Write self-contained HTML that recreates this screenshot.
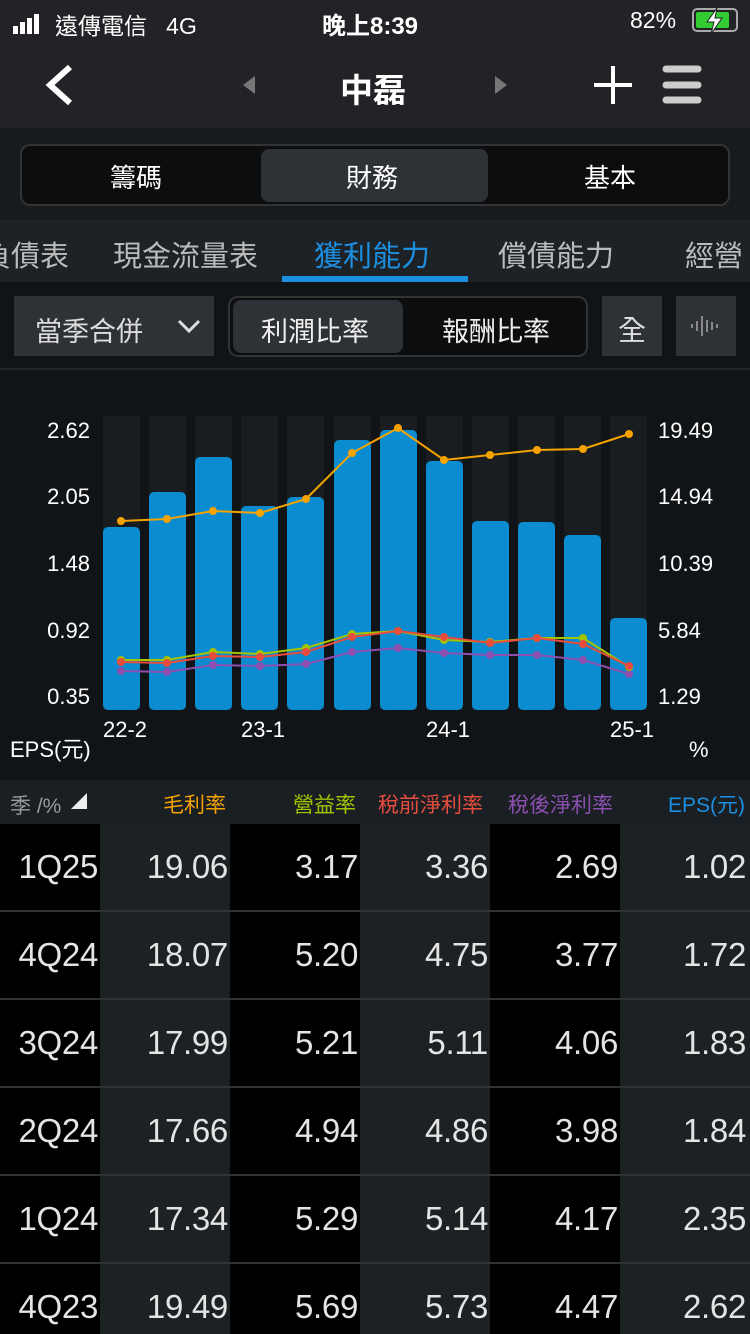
<!DOCTYPE html><html style="width:750px;height:1334px;overflow:hidden"><head><meta charset="utf-8"><style>
*{margin:0;padding:0;box-sizing:border-box}
body{width:750px;height:1334px;background:#111417;font-family:"Liberation Sans","Noto Sans CJK TC",sans-serif;color:#fff;position:relative;overflow:hidden}
.a{position:absolute;white-space:nowrap}
.tb{position:absolute;top:824px;height:510px}
.row{position:absolute;left:0;width:750px;height:88px}
.row .c{position:absolute;top:0;height:86px;line-height:86px;font-size:33px;color:#e4e4e4;text-align:right;letter-spacing:-0.3px}
.sep{position:absolute;left:0;width:750px;height:2px;background:#333}
</style></head><body>
<div class="a" style="left:0;top:0;width:750px;height:128px;background:#212326"></div>
<div class="a" style="left:13px;top:14px;height:20px;display:flex;align-items:flex-end;gap:2px">
<span style="display:inline-block;width:5px;height:8px;background:#fff"></span><span style="display:inline-block;width:5px;height:12px;background:#fff"></span><span style="display:inline-block;width:5px;height:16px;background:#fff"></span><span style="display:inline-block;width:5px;height:20px;background:#fff"></span></div>
<div class="a" style="left:55px;top:7px;font-size:23px">遠傳電信&nbsp;&nbsp;&nbsp;4G</div>
<div class="a" style="left:322px;top:6px;font-size:24px;font-weight:bold">晚上8:39</div>
<div class="a" style="left:630px;top:7px;font-size:23px">82%</div>
<div class="a" style="left:692px;top:8px;width:46px;height:24px;border:2px solid #aaa;border-radius:5px"><div style="position:absolute;left:2px;top:2px;width:33px;height:16px;background:#3c3;border-radius:2px"></div>
<svg style="position:absolute;left:10px;top:-3px" width="22" height="28"><polygon points="13,1 3,15 10,15 7,27 18,11 11,11" fill="#fff" stroke="#222" stroke-width="1"/></svg></div>
<svg class="a" style="left:0;top:50px" width="750" height="70"><polyline points="70,17 50,35 70,53" stroke="#fff" stroke-width="6" fill="none"/><polygon points="255,26 243,35 255,44" fill="#777"/><polygon points="495,26 507,35 495,44" fill="#777"/><path d="M594 35H632M613 16V54" stroke="#fff" stroke-width="4"/><g stroke="#ccc" stroke-width="7" stroke-linecap="round"><path d="M666 19H698M666 35H698M666 50H698"/></g></svg>
<div class="a" style="left:340px;top:64px;font-size:33px;font-weight:bold">中磊</div>
<div class="a" style="left:0;top:128px;width:750px;height:92px;background:#181b1e"></div>
<div class="a" style="left:20px;top:144px;width:710px;height:62px;border:2px solid #333;border-radius:10px;background:#0c0d0f"></div>
<div class="a" style="left:261px;top:149px;width:227px;height:53px;background:#2e3236;border-radius:8px"></div>
<div class="a" style="left:110px;top:158px;font-size:26px">籌碼</div>
<div class="a" style="left:346px;top:158px;font-size:26px">財務</div>
<div class="a" style="left:584px;top:158px;font-size:26px">基本</div>
<div class="a" style="left:0;top:220px;width:750px;height:62px;background:#1d2226"></div>
<div class="a" style="left:-18px;top:233px;font-size:29px;color:#bbb">負債表</div>
<div class="a" style="left:113px;top:233px;font-size:29px;color:#bbb">現金流量表</div>
<div class="a" style="left:314px;top:233px;font-size:29px;color:#1c8fe0">獲利能力</div>
<div class="a" style="left:282px;top:276px;width:186px;height:6px;background:#1c8fe0"></div>
<div class="a" style="left:498px;top:233px;font-size:29px;color:#bbb">償債能力</div>
<div class="a" style="left:685px;top:233px;font-size:29px;color:#bbb">經營</div>
<div class="a" style="left:14px;top:296px;width:200px;height:60px;background:#2e3236"></div>
<div class="a" style="left:35px;top:310px;font-size:27px;color:#ddd">當季合併</div>
<svg class="a" style="left:176px;top:318px" width="26" height="16"><polyline points="3,3 13,13 23,3" stroke="#ddd" stroke-width="3" fill="none"/></svg>
<div class="a" style="left:228px;top:296px;width:360px;height:61px;border:2px solid #333;border-radius:10px;background:#0c0d0f"></div>
<div class="a" style="left:233px;top:300px;width:170px;height:53px;background:#2e3236;border-radius:8px"></div>
<div class="a" style="left:261px;top:310px;font-size:27px;color:#eee">利潤比率</div>
<div class="a" style="left:442px;top:310px;font-size:27px;color:#eee">報酬比率</div>
<div class="a" style="left:602px;top:296px;width:60px;height:60px;background:#2e3236"></div>
<div class="a" style="left:618px;top:309px;font-size:28px;color:#ddd">全</div>
<div class="a" style="left:676px;top:296px;width:60px;height:60px;background:#2e3236"></div>
<svg class="a" style="left:686px;top:312px" width="40" height="28"><g stroke="#888" stroke-width="2"><path d="M6 12V16M11 9V19M16 4V24M21 8V20M26 10V18M31 12V16"/></g></svg>
<div class="a" style="left:0;top:368px;width:750px;height:2px;background:#22262a"></div>
<svg class="a" style="left:0;top:400px" width="750" height="380">
<g fill="#1a1d1f"><rect x="103" y="16" width="37" height="294"/><rect x="149" y="16" width="37" height="294"/><rect x="195" y="16" width="37" height="294"/><rect x="241" y="16" width="37" height="294"/><rect x="287" y="16" width="37" height="294"/><rect x="334" y="16" width="37" height="294"/><rect x="380" y="16" width="37" height="294"/><rect x="426" y="16" width="37" height="294"/><rect x="472" y="16" width="37" height="294"/><rect x="518" y="16" width="37" height="294"/><rect x="564" y="16" width="37" height="294"/><rect x="610" y="16" width="37" height="294"/></g>
<g fill="#0b8bd0"><rect x="103" y="127" width="37" height="183" rx="5"/><rect x="149" y="92" width="37" height="218" rx="5"/><rect x="195" y="57" width="37" height="253" rx="5"/><rect x="241" y="106" width="37" height="204" rx="5"/><rect x="287" y="97" width="37" height="213" rx="5"/><rect x="334" y="40" width="37" height="270" rx="5"/><rect x="380" y="30" width="37" height="280" rx="5"/><rect x="426" y="61" width="37" height="249" rx="5"/><rect x="472" y="121" width="37" height="189" rx="5"/><rect x="518" y="122" width="37" height="188" rx="5"/><rect x="564" y="135" width="37" height="175" rx="5"/><rect x="610" y="218" width="37" height="92" rx="5"/></g>
<g fill="none" stroke-width="2">
<polyline stroke="#f5a300" points="121,121 167,119 213,111 260,113 306,99 352,53 398,28 444,60 490,55 537,50 583,49 629,34"/>
<polyline stroke="#8c4fb0" points="121,271 167,272 213,265 260,266 306,264 352,252 398,248 444,253 490,255 537,255 583,260 629,274"/>
<polyline stroke="#a4c400" points="121,260 167,260 213,252 260,254 306,248 352,234 398,231 444,240 490,242 537,238 583,238 629,267"/>
<polyline stroke="#e84c3d" points="121,262 167,263 213,256 260,257 306,252 352,237 398,231 444,237 490,243 537,238 583,244 629,266"/>
</g>
<g fill="#f5a300"><circle cx="121" cy="121" r="4"/><circle cx="167" cy="119" r="4"/><circle cx="213" cy="111" r="4"/><circle cx="260" cy="113" r="4"/><circle cx="306" cy="99" r="4"/><circle cx="352" cy="53" r="4"/><circle cx="398" cy="28" r="4"/><circle cx="444" cy="60" r="4"/><circle cx="490" cy="55" r="4"/><circle cx="537" cy="50" r="4"/><circle cx="583" cy="49" r="4"/><circle cx="629" cy="34" r="4"/></g>
<g fill="#8c4fb0"><circle cx="121" cy="271" r="4"/><circle cx="167" cy="272" r="4"/><circle cx="213" cy="265" r="4"/><circle cx="260" cy="266" r="4"/><circle cx="306" cy="264" r="4"/><circle cx="352" cy="252" r="4"/><circle cx="398" cy="248" r="4"/><circle cx="444" cy="253" r="4"/><circle cx="490" cy="255" r="4"/><circle cx="537" cy="255" r="4"/><circle cx="583" cy="260" r="4"/><circle cx="629" cy="274" r="4"/></g>
<g fill="#a4c400"><circle cx="121" cy="260" r="4"/><circle cx="167" cy="260" r="4"/><circle cx="213" cy="252" r="4"/><circle cx="260" cy="254" r="4"/><circle cx="306" cy="248" r="4"/><circle cx="352" cy="234" r="4"/><circle cx="398" cy="231" r="4"/><circle cx="444" cy="240" r="4"/><circle cx="490" cy="242" r="4"/><circle cx="537" cy="238" r="4"/><circle cx="583" cy="238" r="4"/><circle cx="629" cy="267" r="4"/></g>
<g fill="#e84c3d"><circle cx="121" cy="262" r="4"/><circle cx="167" cy="263" r="4"/><circle cx="213" cy="256" r="4"/><circle cx="260" cy="257" r="4"/><circle cx="306" cy="252" r="4"/><circle cx="352" cy="237" r="4"/><circle cx="398" cy="231" r="4"/><circle cx="444" cy="237" r="4"/><circle cx="490" cy="243" r="4"/><circle cx="537" cy="238" r="4"/><circle cx="583" cy="244" r="4"/><circle cx="629" cy="266" r="4"/></g>
<g fill="#fff" font-family="Liberation Sans" font-size="22"><text x="90" y="38" text-anchor="end">2.62</text><text x="90" y="104" text-anchor="end">2.05</text><text x="90" y="171" text-anchor="end">1.48</text><text x="90" y="238" text-anchor="end">0.92</text><text x="90" y="304" text-anchor="end">0.35</text>
<text x="658" y="38">19.49</text><text x="658" y="104">14.94</text><text x="658" y="171">10.39</text><text x="658" y="238">5.84</text><text x="658" y="304">1.29</text>
<text x="103" y="337">22-2</text><text x="241" y="337">23-1</text><text x="426" y="337">24-1</text><text x="610" y="337">25-1</text>
<text x="10" y="357">EPS(元)</text><text x="689" y="357">%</text></g>
</svg>
<div class="a" style="left:0;top:780px;width:750px;height:44px;background:#1a1f23"></div>
<div class="a" style="left:10px;top:790px;font-size:21px;color:#999">季 /%</div>
<svg class="a" style="left:70px;top:792px" width="18" height="18"><polygon points="17,1 17,17 1,17" fill="#eee"/></svg>
<div class="a" style="left:163px;top:789px;font-size:21px;color:#f5a300">毛利率</div>
<div class="a" style="left:293px;top:789px;font-size:21px;color:#a4c400">營益率</div>
<div class="a" style="left:378px;top:789px;font-size:21px;color:#e84c3d">稅前淨利率</div>
<div class="a" style="left:508px;top:789px;font-size:21px;color:#8c4fb0">稅後淨利率</div>
<div class="a" style="left:668px;top:789px;font-size:21px;color:#1c8fe0">EPS(元)</div>
<div class="tb" style="left:0;width:100px;background:#000"></div>
<div class="tb" style="left:100px;width:130px;background:#1c2124"></div>
<div class="tb" style="left:230px;width:130px;background:#000"></div>
<div class="tb" style="left:360px;width:130px;background:#1c2124"></div>
<div class="tb" style="left:490px;width:130px;background:#000"></div>
<div class="tb" style="left:620px;width:130px;background:#1c2124"></div>
<div class="sep" style="top:910px"></div><div class="sep" style="top:998px"></div><div class="sep" style="top:1086px"></div><div class="sep" style="top:1174px"></div><div class="sep" style="top:1262px"></div>
<div class="row" style="top:824px"><div class="c" style="left:0;width:98px">1Q25</div><div class="c" style="left:100px;width:128px">19.06</div><div class="c" style="left:230px;width:128px">3.17</div><div class="c" style="left:360px;width:128px">3.36</div><div class="c" style="left:490px;width:128px">2.69</div><div class="c" style="left:620px;width:126px">1.02</div></div>
<div class="row" style="top:912px"><div class="c" style="left:0;width:98px">4Q24</div><div class="c" style="left:100px;width:128px">18.07</div><div class="c" style="left:230px;width:128px">5.20</div><div class="c" style="left:360px;width:128px">4.75</div><div class="c" style="left:490px;width:128px">3.77</div><div class="c" style="left:620px;width:126px">1.72</div></div>
<div class="row" style="top:1000px"><div class="c" style="left:0;width:98px">3Q24</div><div class="c" style="left:100px;width:128px">17.99</div><div class="c" style="left:230px;width:128px">5.21</div><div class="c" style="left:360px;width:128px">5.11</div><div class="c" style="left:490px;width:128px">4.06</div><div class="c" style="left:620px;width:126px">1.83</div></div>
<div class="row" style="top:1088px"><div class="c" style="left:0;width:98px">2Q24</div><div class="c" style="left:100px;width:128px">17.66</div><div class="c" style="left:230px;width:128px">4.94</div><div class="c" style="left:360px;width:128px">4.86</div><div class="c" style="left:490px;width:128px">3.98</div><div class="c" style="left:620px;width:126px">1.84</div></div>
<div class="row" style="top:1176px"><div class="c" style="left:0;width:98px">1Q24</div><div class="c" style="left:100px;width:128px">17.34</div><div class="c" style="left:230px;width:128px">5.29</div><div class="c" style="left:360px;width:128px">5.14</div><div class="c" style="left:490px;width:128px">4.17</div><div class="c" style="left:620px;width:126px">2.35</div></div>
<div class="row" style="top:1264px;height:70px;overflow:hidden"><div class="c" style="left:0;width:98px">4Q23</div><div class="c" style="left:100px;width:128px">19.49</div><div class="c" style="left:230px;width:128px">5.69</div><div class="c" style="left:360px;width:128px">5.73</div><div class="c" style="left:490px;width:128px">4.47</div><div class="c" style="left:620px;width:126px">2.62</div></div>
</body></html>
